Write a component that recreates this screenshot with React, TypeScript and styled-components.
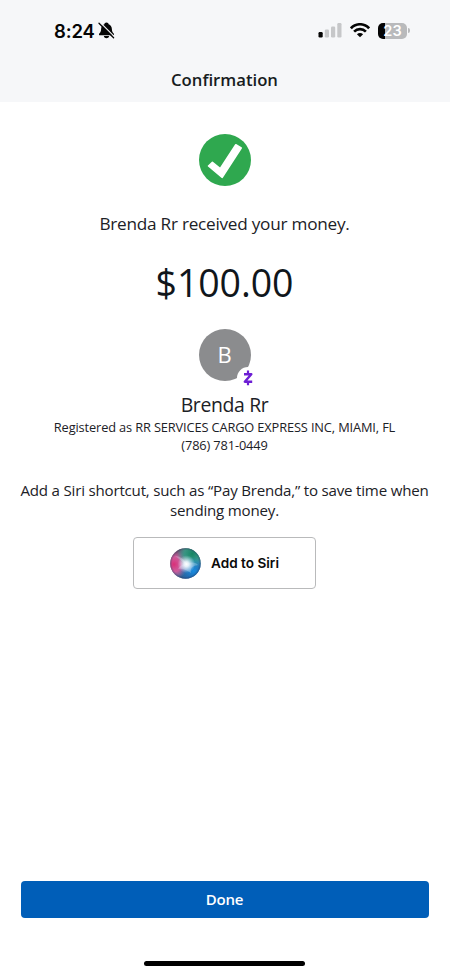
import React from "react";
import styled, { createGlobalStyle } from "styled-components";

const GlobalStyle = createGlobalStyle`
  * { box-sizing: border-box; }
  body { margin: 0; background: #fff; }
`;

const Screen = styled.div`
  width: 450px;
  height: 975px;
  display: flex;
  flex-direction: column;
  overflow: hidden;
  background: #fff;
  color: #1c2126;
  font-family: "Open Sans", "Noto Sans", sans-serif;
`;

const Header = styled.header`
  height: 102px;
  flex: none;
  background: #f6f7f9;
`;

const StatusBar = styled.div`
  height: 60px;
  padding: 1px 40px 0 54px;
  display: flex;
  align-items: center;
  justify-content: space-between;
  color: #050505;
`;

const ClockGroup = styled.div`
  display: flex;
  align-items: center;
  gap: 3px;
`;

const Clock = styled.span`
  font: 600 18.5px/24px Inter, sans-serif;
  letter-spacing: -0.15px;
`;

const StatusIcons = styled.div`
  display: flex;
  align-items: center;
  gap: 8px;
`;

const BatteryWrap = styled.div`
  display: flex;
  align-items: center;
  gap: 1px;
`;

const Battery = styled.div`
  width: 29px;
  height: 16px;
  border-radius: 5px;
  background: linear-gradient(to right, #050505 7px, #b9babc 7px);
  color: #fff;
  font: 600 14.5px/16px Inter, sans-serif;
  text-align: center;
`;

const BatteryTip = styled.span`
  width: 2px;
  height: 5px;
  border-radius: 0 2px 2px 0;
  background: #b9babc;
`;

const Title = styled.h1`
  margin: 8px 1px 0 0;
  text-align: center;
  font-size: 16.7px;
  line-height: 24px;
  font-weight: 600;
  color: #171c21;
`;

const Content = styled.main`
  flex: 1;
  display: flex;
  flex-direction: column;
  align-items: center;
  padding: 32px 1px 0 0;
`;

const Message = styled.p`
  margin: 25px 0 0;
  font-size: 17.2px;
  line-height: 26px;
  letter-spacing: -0.25px;
`;

const Amount = styled.p`
  margin: 20px 0 0;
  font-size: 37.5px;
  line-height: 52px;
  letter-spacing: -0.1px;
  color: #10161b;
`;

const Avatar = styled.div`
  position: relative;
  width: 52px;
  height: 52px;
  margin-top: 20px;
  border-radius: 50%;
  background: #8b8c8e;
  color: #fff;
  font-size: 22px;
  line-height: 51px;
  text-align: center;
`;

const ZelleBadge = styled.span`
  position: absolute;
  left: 38px;
  top: 38px;
  width: 22px;
  height: 22px;
  border-radius: 50%;
  background: #fff;
  display: flex;
  align-items: center;
  justify-content: center;
`;

const Name = styled.h2`
  margin: 10px 0 0;
  font-size: 19.4px;
  line-height: 27px;
  font-weight: 400;
  letter-spacing: -0.35px;
`;

const Detail = styled.p`
  margin: 0;
  font-size: 12.8px;
  line-height: 18px;
  letter-spacing: -0.13px;
`;

const Hint = styled.p`
  margin: 26px 0 0;
  width: 430px;
  text-align: center;
  font-size: 15.1px;
  line-height: 20px;
  letter-spacing: -0.2px;
`;

const SiriButton = styled.button`
  width: 183px;
  height: 52px;
  margin-top: 17px;
  padding: 0;
  display: flex;
  align-items: center;
  justify-content: center;
  gap: 10px;
  border: 1px solid #b9babb;
  border-radius: 4px;
  background: #fff;
  color: #0a0a0a;
  font: 600 13.6px/20px Inter, sans-serif;
`;

const Footer = styled.footer`
  flex: none;
  height: 94px;
  padding: 0 21px;
  display: flex;
  flex-direction: column;
  align-items: center;
`;

const DoneButton = styled.button`
  width: 408px;
  height: 37px;
  flex: none;
  padding: 0 1px 0 0;
  border: 0;
  border-radius: 4px;
  background: #005eb8;
  color: #fff;
  font: 600 15px/37px "Open Sans", sans-serif;
  letter-spacing: -0.2px;
`;

const HomeIndicator = styled.div`
  width: 161px;
  height: 5px;
  margin: 43px 1px 0 0;
  border-radius: 3px;
  background: #000;
`;

const SilentBell = () => (
  <svg width="17" height="17" viewBox="0 0 17 17">
    <path d="M8.5 .5C7.2 .5 6.5 1.3 6.4 2.2C4.2 3 3.2 4.8 3.1 7.2C3 9.4 2.4 10.2 1.3 11.5C.7 12.3 1 13.3 1.9 13.3H15.1C16 13.3 16.3 12.3 15.7 11.5C14.6 10.2 14 9.4 13.9 7.2C13.8 4.8 12.8 3 10.6 2.2C10.5 1.3 9.8 .5 8.5 .5ZM5.8 14.1C6.2 15.6 7.2 16.3 8.5 16.3S10.8 15.6 11.2 14.1Z" fill="#050505" />
    <path d="M2 .3L17 15.3" stroke="#f6f7f9" strokeWidth="1.3" />
    <path d="M1 1.2L15.6 15.8" stroke="#050505" strokeWidth="1.3" strokeLinecap="round" />
  </svg>
);

const Signal = () => (
  <svg width="24" height="15" viewBox="0 0 24 15">
    <rect x=".5" y="9" width="4.2" height="5.5" rx="1.2" fill="#050505" />
    <g fill="#c6c7c9">
      <rect x="6.8" y="6.5" width="4.2" height="8" rx="1.2" />
      <rect x="13" y="3.5" width="4.2" height="11" rx="1.2" />
      <rect x="19.3" y="0" width="4.2" height="14.5" rx="1.2" />
    </g>
  </svg>
);

const Wifi = () => (
  <svg width="20" height="15" viewBox="0 0 20 15" fill="none" stroke="#050505" strokeWidth="2.6">
    <path d="M.9 5.3C6-.1 14-.1 19.1 5.3" />
    <path d="M4.1 8.7C7.4 5.3 12.6 5.3 15.9 8.7" />
    <path d="M6.9 11.2C8.7 9.5 11.3 9.5 13.1 11.2L10 14.3Z" fill="#050505" stroke="none" />
  </svg>
);

const SuccessIcon = () => (
  <svg width="52" height="52" viewBox="0 0 52 52">
    <circle cx="26" cy="26" r="26" fill="#2fa84f" />
    <path
      d="M9.5 32L13.4 28.4L21.2 34.7L36.8 10.8L42.2 14L23.2 43.4Z"
      fill="#fff"
      stroke="#fff"
      strokeWidth="1.6"
      strokeLinejoin="round"
    />
  </svg>
);

const ZelleMark = () => (
  <svg width="10" height="16" viewBox="0 0 10 16" fill="none" stroke="#6d1ed4">
    <path d="M1 4.2H8.3L1.8 11.7H9.2" strokeWidth="2.4" strokeLinejoin="round" />
    <path d="M5 .6V4M5 12V15.3" strokeWidth="2.2" />
  </svg>
);

const SiriOrb = () => (
  <svg width="31" height="31" viewBox="0 0 31 31">
    <defs>
      <linearGradient id="orbBase" x1=".2" y1=".1" x2=".7" y2="1">
        <stop offset="0" stopColor="#6d4666" />
        <stop offset=".45" stopColor="#477e9d" />
        <stop offset="1" stopColor="#204788" />
      </linearGradient>
      <radialGradient id="orbPink" cx=".12" cy=".53" r=".48">
        <stop offset="0" stopColor="#d92f78" />
        <stop offset=".5" stopColor="#dc5a9d" stopOpacity=".9" />
        <stop offset="1" stopColor="#dc5a9d" stopOpacity="0" />
      </radialGradient>
      <radialGradient id="orbGreen" cx=".72" cy=".18" r=".5">
        <stop offset="0" stopColor="#148563" />
        <stop offset=".5" stopColor="#329e83" stopOpacity=".85" />
        <stop offset="1" stopColor="#45b5a2" stopOpacity="0" />
      </radialGradient>
      <radialGradient id="orbBlue" cx=".76" cy=".74" r=".46">
        <stop offset="0" stopColor="#178be0" />
        <stop offset="1" stopColor="#178be0" stopOpacity="0" />
      </radialGradient>
      <radialGradient id="orbGlow" cx=".53" cy=".52" r=".29">
        <stop offset="0" stopColor="#fff" />
        <stop offset=".28" stopColor="#f5faff" stopOpacity=".88" />
        <stop offset="1" stopColor="#d9eaff" stopOpacity="0" />
      </radialGradient>
      <radialGradient id="orbEdge">
        <stop offset=".86" stopColor="#24385c" stopOpacity="0" />
        <stop offset="1" stopColor="#24385c" stopOpacity=".4" />
      </radialGradient>
    </defs>
    <circle cx="15.5" cy="15.5" r="15.2" fill="url(#orbBase)" />
    <circle cx="15.5" cy="15.5" r="15.2" fill="url(#orbPink)" />
    <circle cx="15.5" cy="15.5" r="15.2" fill="url(#orbGreen)" />
    <circle cx="15.5" cy="15.5" r="15.2" fill="url(#orbBlue)" />
    <path d="M5 8C10 8 14 11 17 16C21 14 25 14 28 17C23 18 20 19 21 25C16 22 13 20 8 21C10 18 11 17 15 16C12 13 9 11 5 8Z" fill="#e2effa" opacity=".28" />
    <circle cx="15.5" cy="15.5" r="15.2" fill="url(#orbGlow)" />
    <circle cx="15.5" cy="15.5" r="15.2" fill="url(#orbEdge)" />
  </svg>
);

export default function App() {
  return (
    <>
      <GlobalStyle />
      <Screen>
        <Header>
          <StatusBar>
            <ClockGroup>
              <Clock>8:24</Clock>
              <SilentBell />
            </ClockGroup>
            <StatusIcons>
              <Signal />
              <Wifi />
              <BatteryWrap>
                <Battery>23</Battery>
                <BatteryTip />
              </BatteryWrap>
            </StatusIcons>
          </StatusBar>
          <Title>Confirmation</Title>
        </Header>
        <Content>
          <SuccessIcon />
          <Message>Brenda Rr received your money.</Message>
          <Amount>$100.00</Amount>
          <Avatar>
            B
            <ZelleBadge>
              <ZelleMark />
            </ZelleBadge>
          </Avatar>
          <Name>Brenda Rr</Name>
          <Detail>Registered as RR SERVICES CARGO EXPRESS INC, MIAMI, FL</Detail>
          <Detail>(786) 781-0449</Detail>
          <Hint>Add a Siri shortcut, such as “Pay Brenda,” to save time when sending money.</Hint>
          <SiriButton>
            <SiriOrb />
            Add to Siri
          </SiriButton>
        </Content>
        <Footer>
          <DoneButton>Done</DoneButton>
          <HomeIndicator />
        </Footer>
      </Screen>
    </>
  );
}
